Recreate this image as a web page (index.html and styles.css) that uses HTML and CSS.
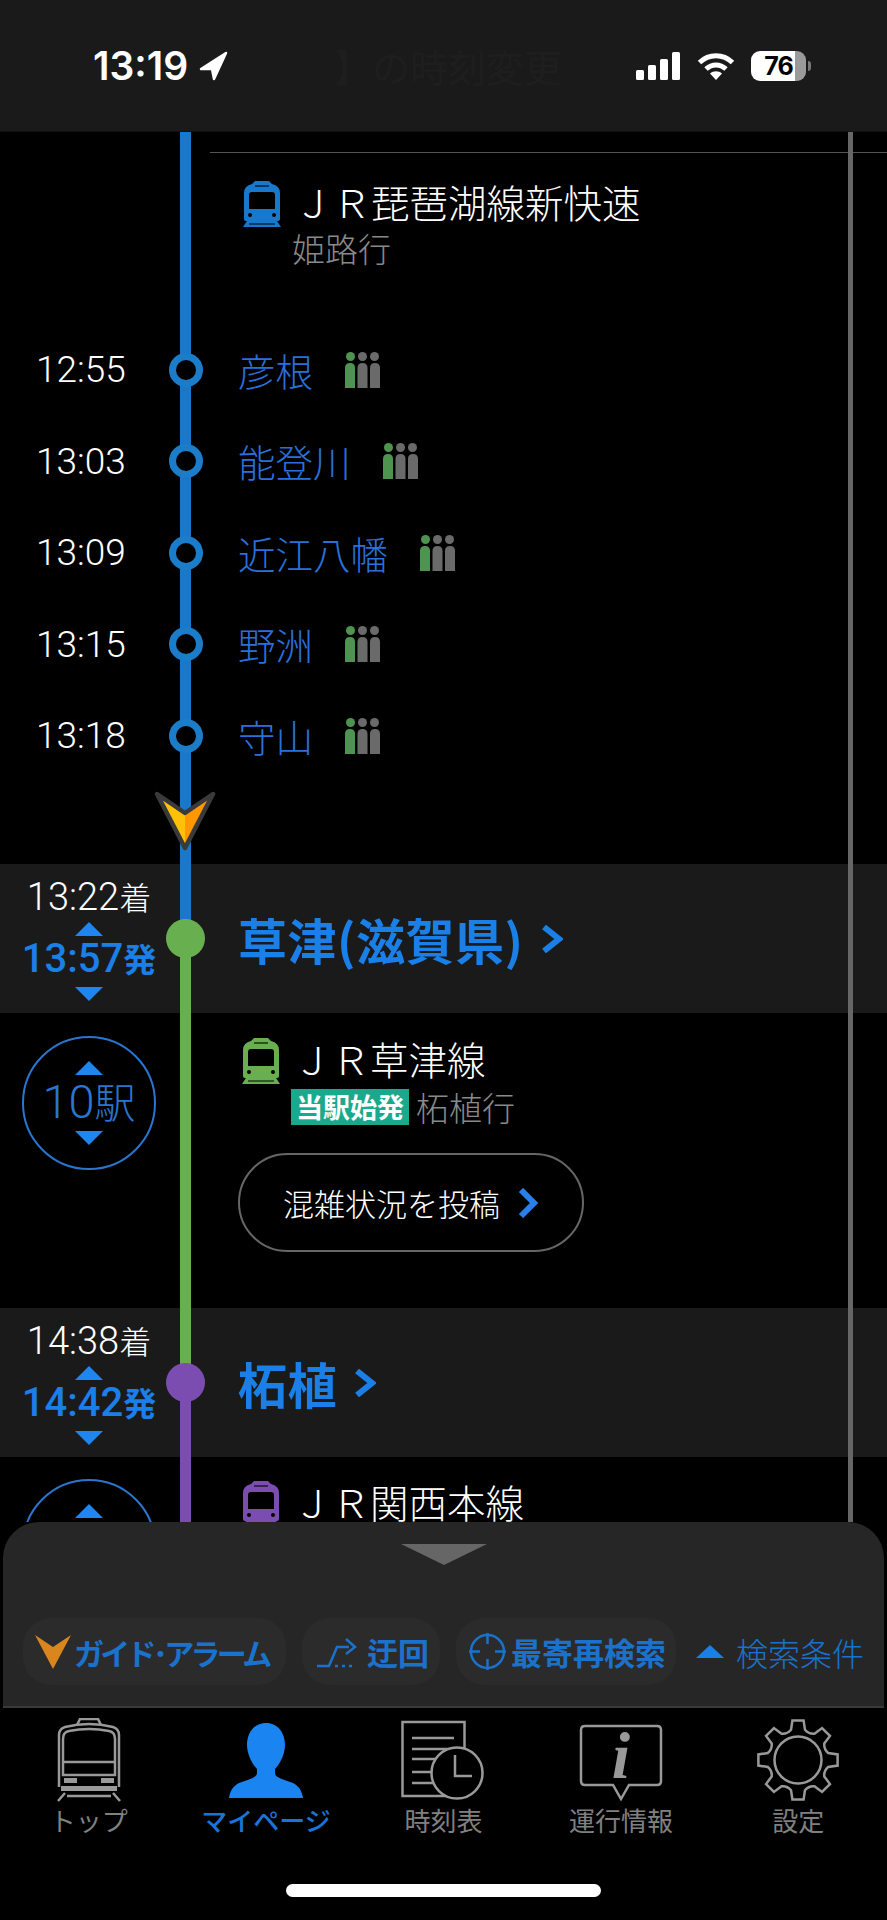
FILE: index.html
```html
<!DOCTYPE html>
<html lang="ja">
<head>
	<meta charset="UTF-8">
	<meta name="viewport" content="width=device-width, initial-scale=1.0">
	<title>経路詳細</title>
	<link rel="stylesheet" href="styles.css">
</head>
<body>
<svg class="defs" width="0" height="0">
	<symbol id="train" viewBox="0 0 38 46">
		<path d="M12 0H26L29 3Q37 5 37 12V38Q37 40 35 40H3Q1 40 1 38V12Q1 5 9 3Z" fill="currentColor"/>
		<rect x="12" y="4" width="14" height="2" fill="#000" opacity=".55"/>
		<path d="M6 14Q6 11 9 11H29Q32 11 32 14V28H6Z" fill="#000"/>
		<circle cx="7" cy="34" r="2" fill="#000"/>
		<circle cx="31" cy="34" r="2" fill="#000"/>
		<path d="M4 40H34L38 46H0Z" fill="currentColor"/>
		<path d="M6 43H32" stroke="#000" stroke-width="1"/>
	</symbol>
	<symbol id="crowd" viewBox="0 0 35 36">
		<circle cx="5.5" cy="4.5" r="4.5" fill="#4f9350"/>
		<circle cx="17.5" cy="4.5" r="4.5" fill="#6a6a6a"/>
		<circle cx="29.5" cy="4.5" r="4.5" fill="#6a6a6a"/>
		<path d="M0 36V16Q0 11 5 11Q10 11 10 16V36Z" fill="#4f9350"/>
		<path d="M12.500 36V16Q12.500 11 17.500 11Q22.500 11 22.500 16V36Z" fill="#6a6a6a"/>
		<path d="M25 36V16Q25 11 30 11Q35 11 35 16V36Z" fill="#6a6a6a"/>
	</symbol>
</svg>

<div class="page">
	<div class="status">
		<div class="status-left">
			<span class="clock">13:19</span>
			<svg class="locate" width="29" height="30" viewBox="0 0 29 30"><path d="M27 2L2 18H13L15 28Z" fill="#fff" stroke="#fff" stroke-width="2.500" stroke-linejoin="round"/></svg>
		</div>
		<span class="ghost-title">】の時刻変更</span>
		<div class="status-right">
			<svg width="44" height="28" viewBox="0 0 44 28"><rect x="0" y="18" width="8" height="10" rx="1.500" fill="#fff"/><rect x="12" y="13" width="8" height="15" rx="1.500" fill="#fff"/><rect x="24" y="7" width="8" height="21" rx="1.500" fill="#fff"/><rect x="36" y="0" width="8" height="28" rx="1.500" fill="#fff"/></svg>
			<svg class="wifi" width="38" height="28" viewBox="0 0 38 28"><path d="M2.500 10.500C12 1.500 26 1.500 35.500 10.500" fill="none" stroke="#fff" stroke-width="5"/><path d="M9 17C15 11.500 23 11.500 29 17" fill="none" stroke="#fff" stroke-width="5"/><path d="M19 28L13 21.500C16.500 18.500 21.500 18.500 25 21.500Z" fill="#fff"/></svg>
			<div class="battery"><span>76</span></div>
			<div class="battery-nub"></div>
		</div>
	</div>

	<div class="route">
		<div class="scrollbar"></div>

		<section class="leg rail-blue leg-first">
			<div class="divider"></div>
			<div class="line-head line-head-first">
				<svg class="train c-blue"><use href="#train"/></svg>
				<span class="line-name">ＪＲ琵琶湖線新快速</span>
			</div>
			<div class="bound bound-first">姫路行</div>

			<div class="stop">
				<span class="stop-time">12:55</span>
				<span class="ring"></span>
				<span class="stop-name">彦根</span>
				<svg class="crowd"><use href="#crowd"/></svg>
			</div>
			<div class="stop">
				<span class="stop-time">13:03</span>
				<span class="ring"></span>
				<span class="stop-name">能登川</span>
				<svg class="crowd"><use href="#crowd"/></svg>
			</div>
			<div class="stop">
				<span class="stop-time">13:09</span>
				<span class="ring"></span>
				<span class="stop-name">近江八幡</span>
				<svg class="crowd"><use href="#crowd"/></svg>
			</div>
			<div class="stop">
				<span class="stop-time">13:15</span>
				<span class="ring"></span>
				<span class="stop-name">野洲</span>
				<svg class="crowd"><use href="#crowd"/></svg>
			</div>
			<div class="stop">
				<span class="stop-time">13:18</span>
				<span class="ring"></span>
				<span class="stop-name">守山</span>
				<svg class="crowd"><use href="#crowd"/></svg>
			</div>
			<div class="here">
				<svg width="64" height="60" viewBox="0 0 64 60">
					<path d="M32 22L4 3L32 57Z" fill="#ffc107"/>
					<path d="M32 22L60 3L32 57Z" fill="#ff9800"/>
					<path d="M32 22L4 3L32 57L60 3Z" fill="none" stroke="#3a3a3a" stroke-width="4.500" stroke-linejoin="round"/>
				</svg>
			</div>
		</section>

		<section class="band band-blue-green">
			<div class="band-times">
				<span class="arr">13:22<small>着</small></span>
				<span class="tri-up"></span>
				<span class="dep">13:57<small>発</small></span>
				<span class="tri-down"></span>
			</div>
			<span class="dot dot-green"></span>
			<div class="station">草津(滋賀県)<svg class="chev" width="22" height="28" viewBox="0 0 22 28"><path d="M3 2L18 14L3 26" fill="none" stroke="#1a7fe6" stroke-width="6"/></svg></div>
		</section>

		<section class="leg rail-green leg-mid">
			<div class="count">
				<span class="tri-up"></span>
				<span class="count-num">10<small>駅</small></span>
				<span class="tri-down"></span>
			</div>
			<div class="leg-body">
				<div class="line-head">
					<svg class="train c-green"><use href="#train"/></svg>
					<span class="line-name">ＪＲ草津線</span>
				</div>
				<div class="bound-row">
					<span class="tag">当駅始発</span>
					<span class="bound">柘植行</span>
				</div>
				<div class="post-btn">混雑状況を投稿<svg width="22" height="30" viewBox="0 0 22 30"><path d="M4 2L17 15L4 28" fill="none" stroke="#2a80e8" stroke-width="6"/></svg></div>
			</div>
		</section>

		<section class="band band-green-purple">
			<div class="band-times">
				<span class="arr">14:38<small>着</small></span>
				<span class="tri-up"></span>
				<span class="dep">14:42<small>発</small></span>
				<span class="tri-down"></span>
			</div>
			<span class="dot dot-purple"></span>
			<div class="station">柘植<svg class="chev" width="22" height="28" viewBox="0 0 22 28"><path d="M3 2L18 14L3 26" fill="none" stroke="#1a7fe6" stroke-width="6"/></svg></div>
		</section>

		<section class="leg rail-purple leg-last">
			<div class="count">
				<span class="tri-up"></span>
			</div>
			<div class="leg-body">
				<div class="line-head">
					<svg class="train c-purple"><use href="#train"/></svg>
					<span class="line-name">ＪＲ関西本線</span>
				</div>
			</div>
		</section>
	</div>

	<div class="panel">
		<div class="handle"></div>
		<div class="tools">
			<div class="pill pill-guide">
				<svg width="36" height="34" viewBox="0 0 36 34"><path d="M0 0L18 12L36 0L18 34Z" fill="#d9861e"/></svg>
				<span class="pill-text tight">ガイド･アラーム</span>
			</div>
			<div class="pill pill-detour">
				<svg width="40" height="34" viewBox="0 0 40 34"><path d="M0 31H12L20 12H32" fill="none" stroke="#1a72cc" stroke-width="2.500"/><path d="M29 4L38 12L29 19" fill="none" stroke="#1a72cc" stroke-width="2.500"/><path d="M18 31H36" fill="none" stroke="#1a72cc" stroke-width="2.500" stroke-dasharray="3 4"/></svg>
				<span class="pill-text">迂回</span>
			</div>
			<div class="pill pill-near">
				<svg width="37" height="37" viewBox="0 0 37 37"><circle cx="18.500" cy="18.500" r="16.500" fill="none" stroke="#1a72cc" stroke-width="2.500"/><path d="M18.500 0V11M18.500 26V37M0 18.500H11M26 18.500H37" stroke="#1a72cc" stroke-width="2.500"/></svg>
				<span class="pill-text">最寄再検索</span>
			</div>
			<div class="cond">
				<span class="cond-tri"></span>
				<span class="cond-text">検索条件</span>
			</div>
		</div>
	</div>

	<nav class="tabs">
		<div class="tab">
			<div class="tab-icon">
				<svg width="64" height="84" viewBox="0 0 64 84" fill="none" stroke="#999" stroke-width="2.500">
					<path d="M20 7L23 1H41L44 7"/>
					<path d="M2 69V17Q2 11 8 9Q32 3 56 9Q62 11 62 17V69"/>
					<path d="M6 57V21Q6 14 12 13Q32 9 52 13Q58 14 58 21V57Z"/>
					<path d="M6 44H58"/>
					<rect x="7" y="60" width="13" height="5" fill="#999" stroke="none"/>
					<rect x="44" y="60" width="13" height="5" fill="#999" stroke="none"/>
					<rect x="4" y="68" width="56" height="5" fill="#999" stroke="none"/>
					<path d="M8 75L1 83M56 75L63 83M10 78H54"/>
				</svg>
			</div>
			<span class="tab-label">トップ</span>
		</div>
		<div class="tab tab-active">
			<div class="tab-icon">
				<svg width="74" height="75" viewBox="0 0 74 75"><path d="M37 0C49 0 56 10 56 22C56 32 50 42 46 46V50C46 55 56 57 64 60C70 63 73 68 74 75H0C1 68 4 63 10 60C18 57 28 55 28 50V46C24 42 18 32 18 22C18 10 25 0 37 0Z" fill="#1a84f0"/></svg>
			</div>
			<span class="tab-label">マイページ</span>
		</div>
		<div class="tab">
			<div class="tab-icon">
				<svg width="84" height="82" viewBox="0 0 84 82" fill="none" stroke="#999" stroke-width="2.500">
					<rect x="1.500" y="3" width="62" height="74"/>
					<path d="M11 19H53M11 30H53M11 40H40M11 53H40M11 64H40"/>
					<circle cx="56" cy="54" r="25.500" fill="#000"/>
					<path d="M54 36V57H71"/>
				</svg>
			</div>
			<span class="tab-label">時刻表</span>
		</div>
		<div class="tab">
			<div class="tab-icon">
				<svg width="84" height="84" viewBox="0 -6 84 84" fill="none" stroke="#999" stroke-width="2.500">
					<path d="M6 2H78Q82 2 82 6V57Q82 61 78 61H50L42 75L34 61H6Q2 61 2 57V6Q2 2 6 2Z"/>
					<text x="42" y="54" text-anchor="middle" class="info-i">i</text>
				</svg>
			</div>
			<span class="tab-label">運行情報</span>
		</div>
		<div class="tab">
			<div class="tab-icon">
				<svg width="84" height="84" viewBox="-42 -42 84 84" fill="none" stroke="#999" stroke-width="2.500">
					<path d="M-6.970 -30.200L-5.570 -39.600H5.570L6.970 -30.200A11 11 0 0 0 16.430 -26.280L24.060 -31.940L31.940 -24.060L26.280 -16.430A11 11 0 0 0 30.200 -6.970L39.600 -5.570V5.570L30.200 6.970A11 11 0 0 0 26.280 16.430L31.940 24.060L24.060 31.940L16.430 26.280A11 11 0 0 0 6.970 30.200L5.570 39.600H-5.570L-6.970 30.200A11 11 0 0 0 -16.430 26.280L-24.060 31.940L-31.940 24.060L-26.280 16.430A11 11 0 0 0 -30.200 6.970L-39.600 5.570V-5.570L-30.200 -6.970A11 11 0 0 0 -26.280 -16.430L-31.940 -24.060L-24.060 -31.940L-16.430 -26.280A11 11 0 0 0 -6.970 -30.200Z"/>
					<circle cx="0" cy="0" r="23.500"/>
				</svg>
			</div>
			<span class="tab-label">設定</span>
		</div>
	</nav>
	<div class="home-bar"></div>
</div>
</body>
</html>
```

FILE: styles.css
```css
*{
	margin: 0;
	padding: 0;
	box-sizing: border-box;
}
body{
	background: #000;
	color: #fff;
	font-family: "Noto Sans CJK JP", sans-serif;
}
.defs{
	display: block;
	height: 0;
}
.page{
	width: 887px;
	height: 1920px;
	overflow: hidden;
}

/* status bar */
.status{
	height: 132px;
	background: #1a1a1a;
	border-bottom: 1px solid #111;
	display: flex;
	align-items: flex-start;
	padding: 46px 75px 0 93px;
}
.status-left{
	width: 241px;
	display: flex;
	align-items: center;
	gap: 11px;
}
.clock{
	font-family: Inter, sans-serif;
	font-size: 39px;
	font-weight: 600;
	line-height: 40px;
}
.ghost-title{
	width: 302px;
	font-size: 38px;
	line-height: 40px;
	color: #1e1e1e;
	white-space: nowrap;
}
.status-right{
	display: flex;
	align-items: center;
	height: 40px;
}
.wifi{
	margin-left: 17px;
}
.battery{
	width: 55px;
	height: 30px;
	margin-left: 16px;
	border-radius: 9px;
	background: linear-gradient(90deg, #fff 80%, #9a9a9a 80%);
	color: #000;
	font-family: Inter, sans-serif;
	font-size: 25px;
	font-weight: 700;
	line-height: 30px;
	text-align: center;
}
.battery span{
	letter-spacing: -1px;
}
.battery-nub{
	width: 3px;
	height: 10px;
	margin-left: 2px;
	border-radius: 0 3px 3px 0;
	background: #777;
}

/* timeline */
.route{
	position: relative;
	height: 1390px;
	overflow: hidden;
}
.scrollbar{
	position: absolute;
	left: 848px;
	top: 0;
	width: 5px;
	height: 100%;
	background: #666;
}
.rail-blue{
	background: linear-gradient(#1878cc, #1878cc) 180px 0 / 11px 100% no-repeat;
}
.rail-green{
	background: linear-gradient(#68b04f, #68b04f) 180px 0 / 11px 100% no-repeat;
}
.rail-purple{
	background: linear-gradient(#7c4db0, #7c4db0) 180px 0 / 11px 100% no-repeat;
}
.leg-first{
	padding-top: 20px;
}
.divider{
	height: 1px;
	margin-left: 210px;
	background: #555;
}
.line-head{
	display: flex;
	align-items: center;
	gap: 13px;
}
.line-head-first{
	margin: 28px 0 0 243px;
}
.train{
	width: 38px;
	height: 46px;
	flex-shrink: 0;
}
.c-blue{ color: #1878cc; }
.c-green{ color: #68b04f; }
.c-purple{ color: #7c4db0; }
.line-name{
	margin-bottom: 6px;
	font-size: 38.500px;
	font-weight: 300;
	line-height: 40px;
	white-space: nowrap;
}
.bound{
	font-size: 33px;
	font-weight: 300;
	line-height: 40px;
	color: #8a8a8a;
}
.bound-first{
	margin: 1px 0 0 292px;
	height: 96px;
}
.stop{
	display: grid;
	grid-template-columns: 168px 35px auto auto 1fr;
	align-items: center;
	height: 91.500px;
}
.stop-time{
	padding-left: 36px;
	font-family: Roboto, sans-serif;
	font-size: 37px;
	font-weight: 300;
}
.ring{
	width: 34px;
	height: 34px;
	margin-left: 1px;
	border: 7px solid #1b7cca;
	border-radius: 50%;
	background: #000;
}
.stop-name{
	padding-left: 35px;
	font-size: 37.500px;
	font-weight: 300;
	line-height: 46px;
	color: #2a70dc;
}
.crowd{
	width: 35px;
	height: 36px;
	margin-left: 32px;
}
.here{
	height: 82.500px;
	padding: 9px 0 0 153px;
}
.here svg{
	display: block;
}

/* station bands */
.band{
	display: grid;
	grid-template-columns: 168px 35px 1fr;
	align-items: center;
	height: 149px;
}
.band-blue-green{
	background:
		linear-gradient(#1878cc, #1878cc) 180px 0 / 11px 50% no-repeat,
		linear-gradient(#68b04f, #68b04f) 180px 100% / 11px 50% no-repeat,
		#1a1a1a;
}
.band-green-purple{
	background:
		linear-gradient(#68b04f, #68b04f) 180px 0 / 11px 50% no-repeat,
		linear-gradient(#7c4db0, #7c4db0) 180px 100% / 11px 50% no-repeat,
		#1a1a1a;
}
.band-times{
	display: flex;
	flex-direction: column;
	align-items: center;
	height: 149px;
	padding: 16px 0 0 10px;
}
.arr,
.dep{
	font-family: Roboto, "Noto Sans CJK JP", sans-serif;
	font-size: 38px;
	white-space: nowrap;
}
.arr{
	font-weight: 300;
	line-height: 34px;
}
.dep{
	margin-top: 5px;
	font-size: 40px;
	font-weight: 500;
	line-height: 36px;
	color: #1a7fe6;
}
.dep + .tri-down{
	margin-top: 8px;
}
.arr small,
.dep small{
	font-size: 32px;
	font-weight: 300;
}
.dep small{
	font-size: 33px;
	font-weight: 700;
}
.tri-up,
.tri-down{
	display: block;
	width: 0;
	height: 0;
	border-left: 14px solid transparent;
	border-right: 14px solid transparent;
}
.tri-up{
	margin-top: 6px;
	border-bottom: 14px solid #1f86f0;
}
.tri-down{
	margin-top: 6px;
	border-top: 14px solid #1f86f0;
}
.dot{
	width: 39px;
	height: 39px;
	margin-left: -2px;
	border-radius: 50%;
}
.dot-green{ background: #68b04f; }
.dot-purple{ background: #7c4db0; }
.station{
	display: flex;
	align-items: center;
	padding-left: 35px;
	font-size: 49px;
	font-weight: 700;
	letter-spacing: .5px;
	line-height: 60px;
	color: #1a7fe6;
}
.chev{
	margin-left: 17px;
}

/* legs between stations */
.leg-mid,
.leg-last{
	display: grid;
	grid-template-columns: 203px 1fr;
	padding-top: 23px;
}
.leg-mid{
	height: 295px;
}
.leg-last{
	height: 70px;
	padding-top: 22px;
}
.count{
	width: 134px;
	height: 134px;
	margin-left: 22px;
	border: 2.500px solid #2a75d0;
	border-radius: 50%;
	display: flex;
	flex-direction: column;
	align-items: center;
	padding-top: 23px;
}
.count .tri-up{
	margin-top: 0;
}
.count-num{
	font-family: Roboto, "Noto Sans CJK JP", sans-serif;
	font-size: 47px;
	font-weight: 300;
	line-height: 46px;
	margin-top: 4px;
	color: #2a75d0;
	white-space: nowrap;
}
.count-num small{
	font-size: 41px;
	font-weight: 300;
}
.count .tri-down{
	margin-top: 4px;
}
.leg-body{
	padding: 2px 0 0 39px;
}
.bound-row{
	display: flex;
	align-items: center;
	gap: 7px;
	margin: 3px 0 0 49px;
}
.tag{
	width: 118px;
	height: 36px;
	background: #1aa98c;
	font-size: 27px;
	font-weight: 700;
	line-height: 36px;
	text-align: center;
	white-space: nowrap;
}
.post-btn{
	display: flex;
	align-items: center;
	width: 346px;
	height: 99px;
	margin: 26px 0 0 -4px;
	padding-left: 43px;
	border: 2.500px solid #666;
	border-radius: 50px;
	font-size: 31px;
	font-weight: 300;
	white-space: nowrap;
}
.post-btn svg{
	margin-left: 17px;
}

/* bottom sheet */
.panel{
	height: 186px;
	margin: 0 3px;
	padding-top: 22px;
	background: #262626;
	border-bottom: 2px solid #3a3a3a;
	border-radius: 36px 36px 0 0;
}
.handle{
	width: 0;
	height: 0;
	margin: 0 auto;
	border-left: 43px solid transparent;
	border-right: 43px solid transparent;
	border-top: 21px solid #666;
}
.tools{
	display: flex;
	align-items: center;
	gap: 16px;
	margin: 53px 0 0 20px;
}
.pill{
	display: flex;
	align-items: center;
	height: 67px;
	border-radius: 28px;
	background: #2b2b2b;
	white-space: nowrap;
}
.pill-guide{
	width: 263px;
	padding-left: 12px;
	gap: 3px;
}
.pill-detour{
	width: 138px;
	padding-left: 15px;
	gap: 10px;
}
.pill-near{
	width: 220px;
	padding-left: 13px;
	gap: 5px;
}
.pill-text{
	font-size: 31px;
	font-weight: 700;
	color: #1a72cc;
}
.pill-text.tight{
	font-size: 30px;
	letter-spacing: -3.700px;
}
.cond{
	display: flex;
	align-items: center;
	gap: 12px;
	margin-left: 4px;
	white-space: nowrap;
}
.cond-tri{
	width: 0;
	height: 0;
	border-left: 14px solid transparent;
	border-right: 14px solid transparent;
	border-bottom: 13px solid #1a7fe6;
}
.cond-text{
	font-size: 32px;
	font-weight: 300;
	color: #1a72cc;
}

/* tab bar */
.tabs{
	display: grid;
	grid-template-columns: repeat(5, 1fr);
	padding-top: 10px;
}
.tab{
	display: flex;
	flex-direction: column;
	align-items: center;
}
.tab-icon{
	display: flex;
	align-items: center;
	justify-content: center;
	height: 84px;
}
.tab-label{
	margin-top: 2px;
	font-size: 26px;
	line-height: 32px;
	color: #808080;
	white-space: nowrap;
}
.tab-active .tab-label{
	color: #1a74d8;
	font-weight: 500;
}
.info-i{
	font-family: "Liberation Serif", serif;
	font-size: 66px;
	font-style: italic;
	font-weight: 700;
	fill: #999;
	stroke: none;
}
.home-bar{
	width: 315px;
	height: 13px;
	margin: 48px auto 0;
	border-radius: 7px;
	background: #fff;
}
```
